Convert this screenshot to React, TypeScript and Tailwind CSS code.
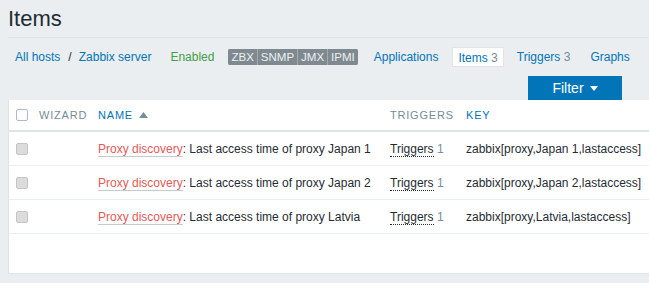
import React from "react";

const rows = [
  { name: "Japan 1", key: "zabbix[proxy,Japan 1,lastaccess]" },
  { name: "Japan 2", key: "zabbix[proxy,Japan 2,lastaccess]" },
  { name: "Latvia", key: "zabbix[proxy,Latvia,lastaccess]" },
];

const Check = ({ header }: { header?: boolean }) => (
  <span
    className={
      "block w-[12px] h-[12px] rounded-[2px] border " +
      (header ? "bg-white border-[#acbbc2]" : "bg-[#dcdcdc] border-[#c5c5c5]")
    }
  />
);

const cols = "grid grid-cols-[30px_59px_292px_76px_1fr] items-center";

export default function App() {
  return (
    <div className="w-[649px] h-[283px] overflow-hidden bg-[#ebeef0] font-['Liberation_Sans',Arial,sans-serif] text-[12px] text-[#1f2c33]">
      <div className="pl-2">
        <h1 className="text-[22px] leading-[26px] pt-[6px] pb-[5px] border-b border-[#dfe4e7] font-normal">Items</h1>
      </div>

      <div className="flex items-center h-[20px] mt-[9px] pl-[15px] whitespace-nowrap">
        <span className="text-[#0275b8]">All hosts</span>
        <span className="ml-[8px] text-[#1f2c33]">/</span>
        <span className="ml-[7px] text-[#0275b8]">Zabbix server</span>
        <span className="ml-[19px] text-[#429e47]">Enabled</span>
        <div className="ml-[14px] flex h-[16px] rounded-[2px] overflow-hidden bg-[#a3abb0] gap-[1px] text-[11.5px] leading-[16px] text-[#eef1f2]">
          <span className="bg-[#7f8a90] px-[3px]">ZBX</span>
          <span className="bg-[#7f8a90] px-[3px]">SNMP</span>
          <span className="bg-[#7f8a90] px-[3px]">JMX</span>
          <span className="bg-[#7f8a90] px-[3px]">IPMI</span>
        </div>
        <span className="ml-[16px] text-[#0275b8]">Applications</span>
        <span className="ml-[14px] h-[20px] leading-[20px] px-[5px] bg-white border border-[#dfe4e7] text-[#0275b8]">
          Items <span className="text-[#768d99]">3</span>
        </span>
        <span className="ml-[13px] text-[#0275b8]">
          Triggers <span className="text-[#768d99]">3</span>
        </span>
        <span className="ml-[20px] text-[#0275b8]">Graphs</span>
      </div>

      <div className="flex justify-end pr-[27px] mt-[9px]">
        <div className="w-[94px] h-[24px] bg-[#0275b8] text-white text-[14px] flex items-center justify-center gap-[6px]">
          <span>Filter</span>
          <svg width="8" height="5" viewBox="0 0 8 5" className="mt-[1px]">
            <path d="M0 0H8L4 5Z" fill="white" />
          </svg>
        </div>
      </div>

      <div className="ml-2 h-[174px] bg-white border-l border-b border-[#dfe4e7]">
        <div className={cols + " h-[32px] border-b-2 border-[#dfe4e7] text-[11px] tracking-[0.8px]"}>
          <div className="pl-[7px]"><Check header /></div>
          <div className="text-[#768d99]">WIZARD</div>
          <div className="text-[#0275b8] flex items-center gap-[6px]">
            NAME
            <svg width="9" height="6" viewBox="0 0 9 6"><path d="M0 6H9L4.5 0Z" fill="#768d99" /></svg>
          </div>
          <div className="text-[#768d99]">TRIGGERS</div>
          <div className="text-[#0275b8]">KEY</div>
        </div>
        {rows.map((r) => (
          <div key={r.name} className={cols + " h-[34px] border-b border-[#ebeef0] whitespace-nowrap pt-[1px]"}>
            <div className="pl-[7px]"><Check /></div>
            <div />
            <div>
              <span className="text-[#e45959] border-b border-[#c5ccd0]">Proxy discovery</span>
              : Last access time of proxy {r.name}
            </div>
            <div>
              <span className="border-b border-dotted border-[#1f2c33]">Triggers</span>{" "}
              <span className="text-[#768d99]">1</span>
            </div>
            <div>{r.key}</div>
          </div>
        ))}
      </div>
    </div>
  );
}
